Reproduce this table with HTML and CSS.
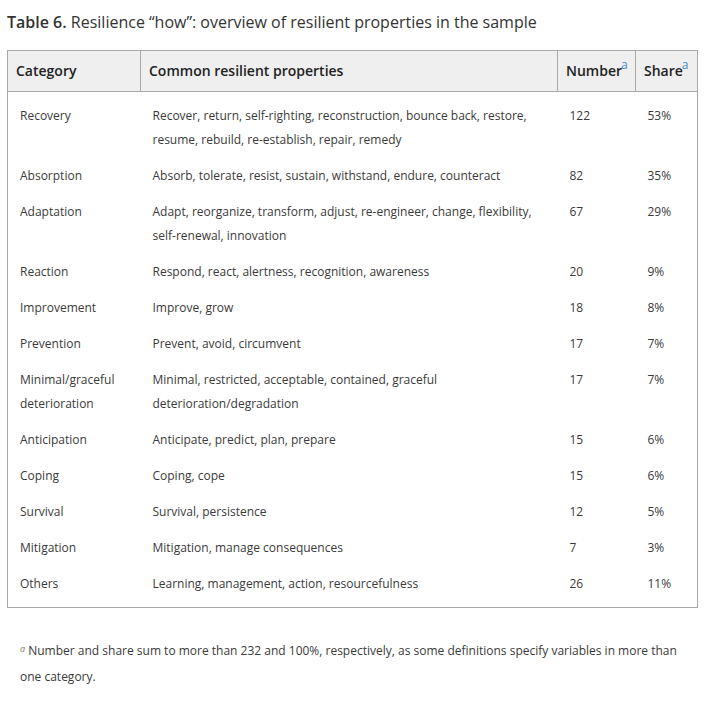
FILE: index.html
```html
<!DOCTYPE html>
<html lang="en">
<head>
<meta charset="utf-8">
<title>Table 6</title>
<link rel="stylesheet" href="styles.css">
</head>
<body>
<div class="page">
  <h2 class="caption"><span class="label">Table 6.</span> Resilience “how”: overview of resilient properties in the sample</h2>
  <table class="data">
    <colgroup>
      <col class="c1"><col class="c2"><col class="c3"><col class="c4">
    </colgroup>
    <thead>
      <tr>
        <th>Category</th>
        <th>Common resilient properties</th>
        <th>Number<sup class="ref">a</sup></th>
        <th>Share<sup class="ref">a</sup></th>
      </tr>
    </thead>
    <tbody>
      <tr><td>Recovery</td><td>Recover, return, self-righting, reconstruction, bounce back, restore, resume, rebuild, re-establish, repair, remedy</td><td>122</td><td>53%</td></tr>
      <tr><td>Absorption</td><td>Absorb, tolerate, resist, sustain, withstand, endure, counteract</td><td>82</td><td>35%</td></tr>
      <tr><td>Adaptation</td><td>Adapt, reorganize, transform, adjust, re-engineer, change, flexibility, self-renewal, innovation</td><td>67</td><td>29%</td></tr>
      <tr><td>Reaction</td><td>Respond, react, alertness, recognition, awareness</td><td>20</td><td>9%</td></tr>
      <tr><td>Improvement</td><td>Improve, grow</td><td>18</td><td>8%</td></tr>
      <tr><td>Prevention</td><td>Prevent, avoid, circumvent</td><td>17</td><td>7%</td></tr>
      <tr><td>Minimal/graceful deterioration</td><td>Minimal, restricted, acceptable, contained, graceful deterioration/degradation</td><td>17</td><td>7%</td></tr>
      <tr><td>Anticipation</td><td>Anticipate, predict, plan, prepare</td><td>15</td><td>6%</td></tr>
      <tr><td>Coping</td><td>Coping, cope</td><td>15</td><td>6%</td></tr>
      <tr><td>Survival</td><td>Survival, persistence</td><td>12</td><td>5%</td></tr>
      <tr><td>Mitigation</td><td>Mitigation, manage consequences</td><td>7</td><td>3%</td></tr>
      <tr><td>Others</td><td>Learning, management, action, resourcefulness</td><td>26</td><td>11%</td></tr>
    </tbody>
  </table>
  <p class="footnote"><sup class="fn">a</sup> Number and share sum to more than 232 and 100%, respectively, as some definitions specify variables in more than one category.</p>
</div>
</body>
</html>
```
FILE: styles.css
```css
html, body {
  margin: 0;
  padding: 0;
  background: #ffffff;
}

body {
  font-family: "Open Sans", "Liberation Sans", sans-serif;
  color: #333333;
}

.page {
  width: 690px;
  padding: 10px 0 0 7px;
}

.caption {
  margin: 0 0 16px 0;
  font-size: 16px;
  line-height: 24px;
  font-weight: 400;
  color: #333333;
}

.caption .label {
  font-weight: 600;
}

.data {
  width: 690px;
  border-collapse: collapse;
  table-layout: fixed;
  border: 1px solid #a9a9a9;
}

.c1 { width: 133px; }
.c2 { width: 417px; }
.c3 { width: 78px; }
.c4 { width: 62px; }

.data th {
  background: #efefef;
  border: 1px solid #a9a9a9;
  font-size: 14px;
  font-weight: 600;
  line-height: 20px;
  padding: 10px 8px;
  text-align: left;
  color: #222222;
  white-space: nowrap;
}

.ref {
  font-size: 12px;
  font-weight: 400;
  color: #3f8ad0;
  line-height: 0;
  vertical-align: 7px;
  margin-left: -1px;
}

.data td {
  font-size: 12px;
  line-height: 24px;
  padding: 6px 12px;
  vertical-align: top;
  color: #3a3a3a;
}

.data tbody tr:first-child td {
  padding-top: 12px;
}

.data tbody tr:last-child td {
  padding-bottom: 11px;
}

.footnote {
  margin: 30px 0 0 13px;
  font-size: 12px;
  line-height: 26px;
  color: #3a3a3a;
}

.fn {
  font-style: italic;
  color: #8a7a60;
  font-size: 9px;
  line-height: 1;
  vertical-align: 3px;
  margin-right: 0;
}
```
